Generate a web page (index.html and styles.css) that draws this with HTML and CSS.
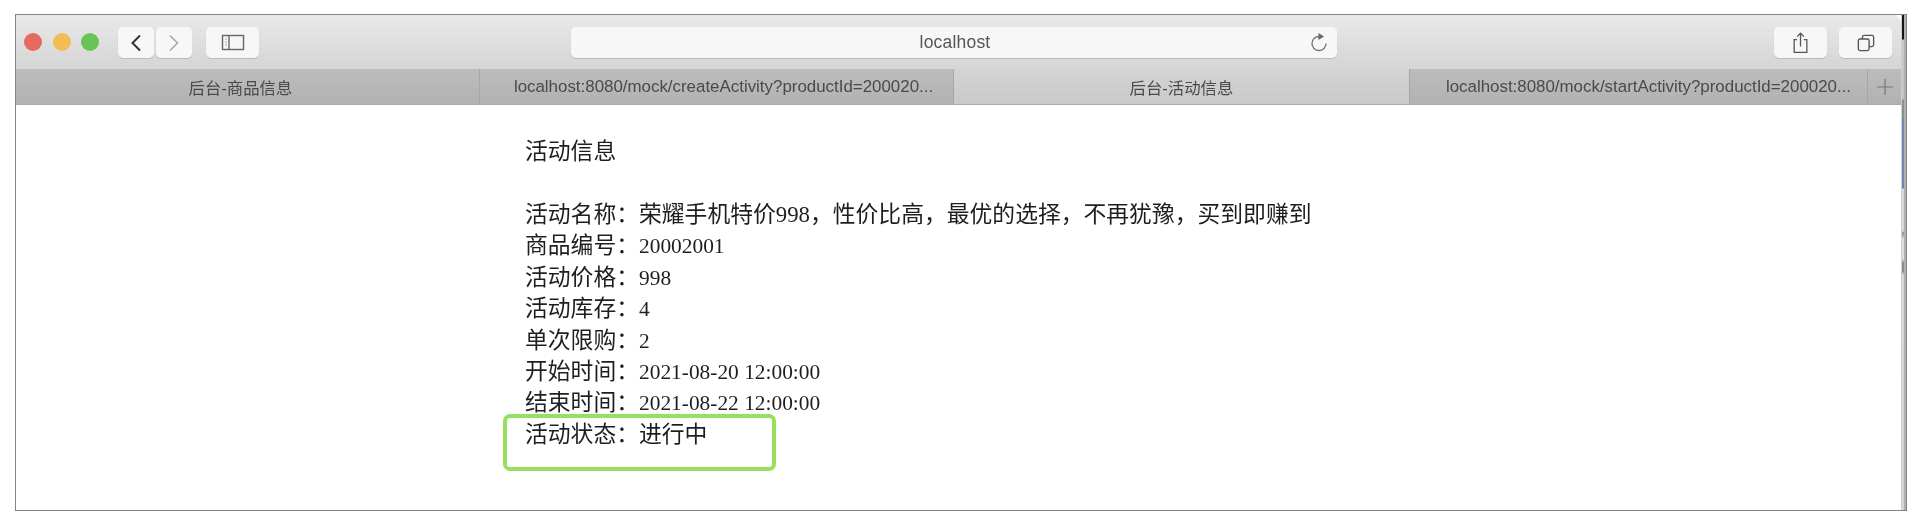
FILE: index.html
```html
<!DOCTYPE html>
<html lang="zh-CN">
<head>
  <meta charset="UTF-8" />
  <title>活动信息</title>
  <link rel="stylesheet" href="styles.css">
</head>
<body>

  <div class="frame">
    <div class="window">
      <!-- Toolbar -->
      <div class="toolbar">
        <div class="lights">
          <span class="light red"></span>
          <span class="light yellow"></span>
          <span class="light green"></span>
        </div>
        <div class="nav-btns">
          <button class="tool-btn nav-btn">
            <svg width="12" height="20" viewBox="0 0 12 20"><path d="M10 2.5 L2.5 10 L10 17.5" fill="none" stroke="#333" stroke-width="2"/></svg>
          </button>
          <button class="tool-btn nav-btn">
            <svg width="12" height="20" viewBox="0 0 12 20"><path d="M2 2.5 L9.5 10 L2 17.5" fill="none" stroke="#a8a8a8" stroke-width="1.5"/></svg>
          </button>
        </div>
        <button class="tool-btn sidebar-btn">
          <svg width="24" height="18" viewBox="0 0 24 18"><rect x="1.5" y="1.5" width="21" height="14" fill="none" stroke="#666" stroke-width="1.4"/><path d="M8 2 V15" stroke="#666" stroke-width="1.4"/><path d="M4 5 H6 M4 8 H6 M4 11 H6" stroke="#aaa" stroke-width="1"/></svg>
        </button>
        <div class="address">
          <span class="address-text">localhost</span>
          <svg class="reload" width="20" height="22" viewBox="0 0 20 22"><path d="M10 4.5 A7 7 0 1 0 17 11.5" fill="none" stroke="#777" stroke-width="1.4"/><path d="M9.5 1 L15 4.5 L9.5 8 Z" fill="#666"/></svg>
        </div>
        <button class="tool-btn right-btn share-btn">
          <svg width="17" height="22" viewBox="0 0 20 26"><path d="M6 9 H2.5 V24 H17.5 V9 H14" fill="none" stroke="#555" stroke-width="1.5"/><path d="M10 17 V2 M6 5.5 L10 1.5 L14 5.5" fill="none" stroke="#555" stroke-width="1.5"/></svg>
        </button>
        <button class="tool-btn right-btn">
          <svg width="18" height="18" viewBox="0 0 20 20"><rect x="1.5" y="5.5" width="12" height="13" rx="2" fill="none" stroke="#555" stroke-width="1.5"/><path d="M6 5.5 V3.5 Q6 1.5 8 1.5 H16.5 Q18.5 1.5 18.5 3.5 V12 Q18.5 14 16.5 14 H13.5" fill="none" stroke="#555" stroke-width="1.5"/></svg>
        </button>
      </div>

      <!-- Tabs -->
      <div class="tabs">
        <div class="tab tab-first">后台-商品信息</div>
        <div class="tab tab-second">localhost:8080/mock/createActivity?productId=200020...</div>
        <div class="tab tab-active">后台-活动信息</div>
        <div class="tab tab-fourth">localhost:8080/mock/startActivity?productId=200020...</div>
        <div class="tab-add">
          <svg width="16" height="16" viewBox="0 0 16 16"><path d="M8 0 V16 M0 8 H16" stroke="#777" stroke-width="1.2"/></svg>
        </div>
      </div>

      <!-- Page content -->
      <div class="content">
        <p class="title">活动信息</p>
        <ul class="info">
          <li>活动名称：荣耀手机特价998，性价比高，最优的选择，不再犹豫，买到即赚到</li>
          <li>商品编号：<span class="num">20002001</span></li>
          <li>活动价格：<span class="num">998</span></li>
          <li>活动库存：<span class="num">4</span></li>
          <li>单次限购：<span class="num">2</span></li>
          <li>开始时间：<span class="num">2021-08-20 12:00:00</span></li>
          <li>结束时间：<span class="num">2021-08-22 12:00:00</span></li>
          <li class="status">活动状态：进行中<span class="highlight"></span></li>
        </ul>
      </div>
    </div>
    <!-- sliver of the desktop behind the browser -->
    <div class="desktop-strip"></div>
  </div>

</body>
</html>
```

FILE: styles.css
```css
* {
  box-sizing: border-box;
  margin: 0;
  padding: 0;
}

body {
  background: #ffffff;
  width: 1920px;
  height: 527px;
  padding: 14px 13px 0 15px;
  overflow: hidden;
  font-family: "Liberation Serif", "Noto Sans CJK SC", serif;
  filter: blur(0.6px);
}

.frame {
  height: 497px;
  border: 1px solid #858585;
  display: flex;
  background: #ffffff;
}

.window {
  flex: 1;
  min-width: 0;
}

.desktop-strip {
  width: 5px;
  background: linear-gradient(
    #10141c 0, #10141c 24px,
    #c9c9c9 25px, #c4c4c4 84px,
    #8f8f8f 85px, #8f8f8f 103px,
    #6f86ad 104px, #6f86ad 173px,
    #d8d8d8 174px, #d8d8d8 216px,
    #8c8c8c 218px, #dddddd 224px,
    #dddddd 244px, #8a8a8a 248px, #8a8a8a 256px,
    #d8d8d8 260px, #d4d4d4 100%
  );
  border-left: 1px solid #cfcfcf;
  border-right: 2px solid #b0b0b0;
}

/* Toolbar */
.toolbar {
  height: 54px;
  display: flex;
  align-items: flex-start;
  padding-top: 12px;
  background: linear-gradient(#e9e9e9, #d5d5d5);
  border-top-right-radius: 8px;
}

.lights {
  display: flex;
  gap: 10.5px;
  margin: 6px 0 0 8px;
}

.light {
  width: 18px;
  height: 18px;
  border-radius: 50%;
}

.light.red { background: #e66a5f; }
.light.yellow { background: #f2bd55; }
.light.green { background: #69c357; }

.tool-btn {
  height: 31px;
  border: none;
  border-radius: 5px;
  background: #f7f7f7;
  box-shadow: 0 1px 1px rgba(0, 0, 0, 0.14);
  display: flex;
  align-items: center;
  justify-content: center;
}

.nav-btns {
  display: flex;
  gap: 2px;
  margin-left: 19px;
}

.nav-btn {
  width: 36px;
}

.sidebar-btn {
  width: 53px;
  margin-left: 14px;
}

.address {
  width: 766px;
  height: 31px;
  margin-left: 312px;
  border-radius: 5px;
  background: #f7f7f7;
  box-shadow: 0 1px 1px rgba(0, 0, 0, 0.14);
  display: flex;
  align-items: center;
  padding-right: 8px;
}

.address-text {
  flex: 1;
  text-align: center;
  padding-left: 30px;
  font-family: "Liberation Sans", sans-serif;
  font-size: 17.5px;
  letter-spacing: 0.2px;
  color: #555;
}

.right-btn {
  width: 53px;
  margin-left: 12px;
}

.share-btn {
  margin-left: 437px;
}

/* Tabs */
.tabs {
  height: 36px;
  display: flex;
  background: linear-gradient(#bcbcbc, #b2b2b2);
  border-bottom: 1px solid #a9a9a9;
  font-family: "Liberation Sans", "Noto Sans CJK SC", sans-serif;
  font-size: 16.9px;
  color: #4a4a4a;
}

.tab {
  display: flex;
  align-items: center;
  justify-content: center;
  white-space: nowrap;
  border-right: 1px solid #a6a6a6;
}

.tab-first {
  width: 464px;
  padding-right: 14px;
  font-size: 16.4px;
}

.tab-second {
  width: 474px;
  padding-left: 14px;
}

.tab-active {
  width: 456px;
  font-size: 16.4px;
  background: linear-gradient(#d4d4d4, #c9c9c9);
}

.tab-fourth {
  width: 458px;
  padding-left: 20px;
}

.tab-add {
  flex: 1;
  display: flex;
  align-items: center;
  justify-content: center;
  padding-top: 1px;
}

/* Page content */
.content {
  padding: 32px 0 0 509px;
  color: #1e1e1e;
  font-size: 22.8px;
}

.title {
  line-height: 30px;
  margin-bottom: 32px;
}

.info {
  list-style: none;
}

.info li {
  height: 31.4px;
  line-height: 31.4px;
  white-space: nowrap;
}

.num {
  font-size: 21.4px;
}

.status {
  position: relative;
}

/* green annotation drawn over the last row */
.highlight {
  position: absolute;
  left: -22px;
  top: -5px;
  width: 273px;
  height: 57px;
  border: 4px solid #97e05f;
  border-radius: 7px;
}
```
